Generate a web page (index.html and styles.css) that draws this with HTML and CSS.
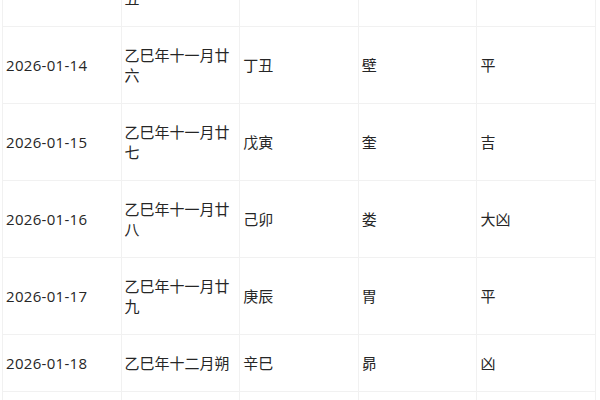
FILE: index.html
```html
<!DOCTYPE html>
<html lang="zh">
<head>
<meta charset="utf-8">
<title>黄历</title>
<link rel="stylesheet" href="styles.css">
</head>
<body>
<table class="almanac">
  <tbody>
    <tr><td class="date">2026-01-13</td><td>乙巳年十一月廿五</td><td>丙子</td><td>室</td><td>吉</td></tr>
    <tr><td class="date">2026-01-14</td><td>乙巳年十一月廿六</td><td>丁丑</td><td>壁</td><td>平</td></tr>
    <tr><td class="date">2026-01-15</td><td>乙巳年十一月廿七</td><td>戊寅</td><td>奎</td><td>吉</td></tr>
    <tr><td class="date">2026-01-16</td><td>乙巳年十一月廿八</td><td>己卯</td><td>娄</td><td>大凶</td></tr>
    <tr><td class="date">2026-01-17</td><td>乙巳年十一月廿九</td><td>庚辰</td><td>胃</td><td>平</td></tr>
    <tr><td class="date">2026-01-18</td><td>乙巳年十二月朔</td><td>辛巳</td><td>昴</td><td>凶</td></tr>
    <tr><td class="date">2026-01-19</td><td>乙巳年十二月初二</td><td>壬午</td><td>毕</td><td>吉</td></tr>
  </tbody>
</table>
</body>
</html>
```

FILE: styles.css
```css
html, body {
  margin: 0;
  padding: 0;
  background: #ffffff;
}
body {
  font-family: "Open Sans", "Noto Sans CJK SC", sans-serif;
  font-size: 15px;
  color: #262626;
  overflow: hidden;
}
.almanac {
  border-collapse: collapse;
  table-layout: fixed;
  width: 594px;
  margin: -51px 0 0 2px;
}
.almanac td {
  width: 20%;
  border: 1px solid #f1f1f1;
  padding: 18px 3px;
  line-height: 20px;
  vertical-align: middle;
  text-align: left;
}
.almanac td.date {
  letter-spacing: 0.3px;
}
```
